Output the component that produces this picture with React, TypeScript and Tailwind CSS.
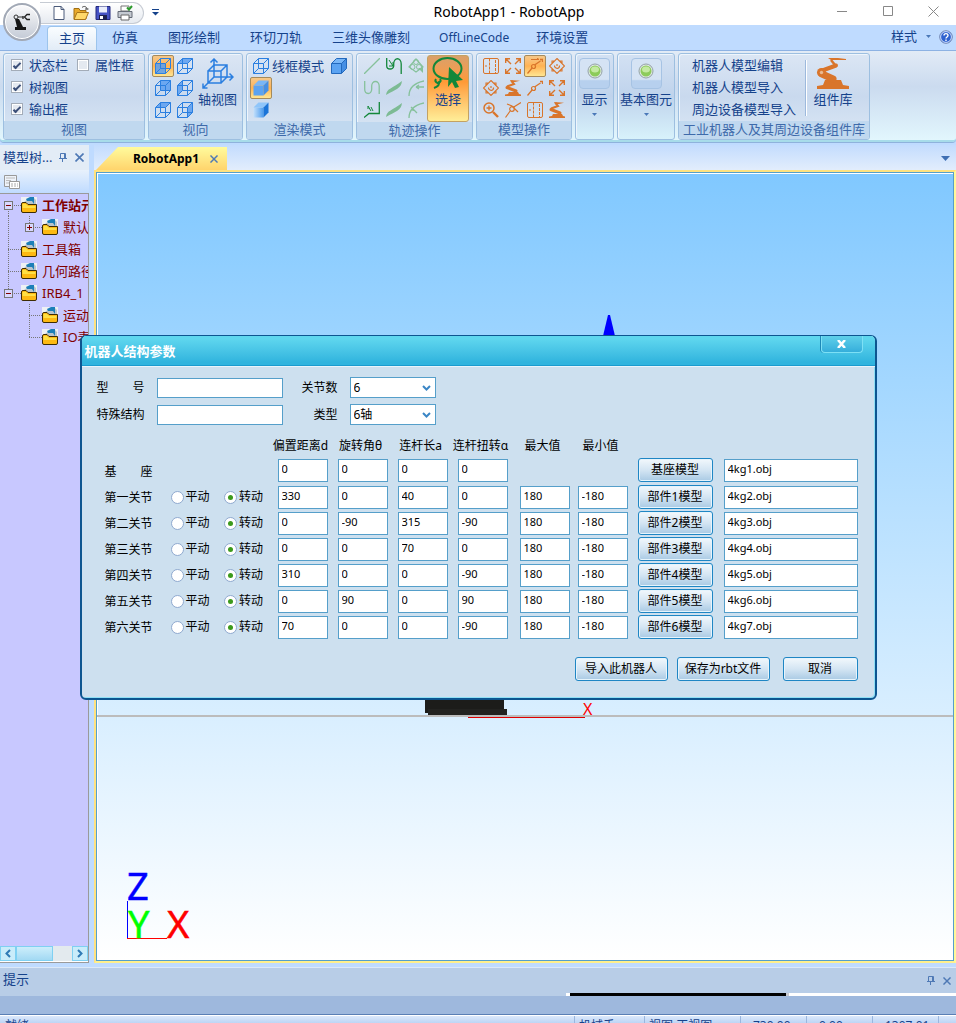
import React from "react";

const BLUE = "#2b7fe0";
const GREEN = "#12873a";
const ORANGE = "#d9752b";

type Kids = { children?: React.ReactNode };

function Ico({ children, size = 16 }: Kids & { size?: number }) {
  return (
    <svg width={size} height={size} viewBox="0 0 16 16" fill="none" className="shrink-0" aria-hidden="true">
      {children}
    </svg>
  );
}

const FACES: Record<string, string> = {
  front: "0.5,5.5 10.5,5.5 10.5,15.5 0.5,15.5",
  back: "5.5,0.5 15.5,0.5 15.5,10.5 5.5,10.5",
  top: "0.5,5.5 5.5,0.5 15.5,0.5 10.5,5.5",
  left: "0.5,5.5 5.5,0.5 5.5,10.5 0.5,15.5",
  right: "10.5,5.5 15.5,0.5 15.5,10.5 10.5,15.5",
};

function Cube({ face }: { face?: string }) {
  return (
    <Ico>
      {face && <polygon points={FACES[face]} fill="#5a9df0" fillOpacity=".85" />}
      <g stroke={BLUE} strokeWidth="1">
        <path d="M.5 5.500h10v10H.5zM5.500.5h10v10h-10zM.5 5.500l5-5M10.500 5.500l5-5M.5 15.500l5-5M10.500 15.500l5-5" />
      </g>
    </Ico>
  );
}

function SolidCube({ edges = true }: { edges?: boolean }) {
  return (
    <Ico>
      <path d="M.5 5.500h10v10H.5z" fill="#5ba3f2" />
      <path d="M.5 5.500l5-5h10l-5 5z" fill="#78b6f7" />
      <path d="M10.500 5.500l5-5v10l-5 5z" fill="#468fe4" />
      {edges && <path d="M.5 5.500h10v10H.5zM.5 5.500l5-5h10v10l-5 5M10.500 5.500l5-5" stroke="#2369bd" />}
    </Ico>
  );
}

function ShadedCube() {
  return (
    <Ico>
      <defs>
        <linearGradient id="shade" x1="0" x2="1">
          <stop offset="0" stopColor="#c4e0fb" />
          <stop offset="1" stopColor="#4a9bee" />
        </linearGradient>
      </defs>
      <path d="M.5 5.500h10v10H.5z" fill="url(#shade)" />
      <path d="M.5 5.500l5-5h10l-5 5z" fill="#8ec5fa" />
      <path d="M10.500 5.500l5-5v10l-5 5z" fill="#1a74d8" />
    </Ico>
  );
}

function AxisCube() {
  return (
    <svg width="32" height="32" viewBox="0 0 32 32" fill="none" stroke={BLUE} strokeWidth="1.500" aria-hidden="true">
      <path d="M6 13h13v12H6zM12 7h13v12H12zM6 13l6-6M19 13l6-6M6 25l6-6M19 25l6-6" />
      <path d="M12 8V1M8.500 4.500L12 1l3.500 3.500M25 19h6M27.500 15.500L31 19l-3.500 3.500M6 25l-5 5M1 25.500V30h4.500" />
    </svg>
  );
}

const pale = "#86c19b";
const TRACK_ICONS = [
  <Ico><path d="M0 16L16 0" stroke={pale} strokeWidth="1.300" /></Ico>,
  <Ico><path d="M.7 0v8c0 4 7 4 7 0V6c0-7 7.500-7 7.500 0v10" stroke={GREEN} strokeWidth="1.300" /><path d="M3 2l4 6M7 4v4H3" stroke={GREEN} /></Ico>,
  <Ico><path d="M8 1L1 9l7 5 7-5z" stroke={pale} strokeWidth="1.200" /><circle cx="8" cy="4" r="2.500" stroke={pale} /><circle cx="4.500" cy="9" r="2.500" stroke={pale} /><circle cx="11" cy="9" r="2.500" stroke={pale} /><path d="M10 10h5v5z" fill={pale} /></Ico>,
  <Ico><path d="M.7 1v8c0 6 7 6 7 0V6c0-6 7.500-6 7.500 0v8" stroke={pale} strokeWidth="1.300" /></Ico>,
  <Ico><path d="M0 15c1-7 6-6 16-14-1 8-6 8-16 14z" fill="#7dbb94" /></Ico>,
  <Ico><path d="M1 16C1 8 6 3 16 1M8 7h8M8 7l3-2M8 7l3 2" stroke={pale} strokeWidth="1.300" /></Ico>,
  <Ico><path d="M0 15.500l5-4h10.300V0" stroke={GREEN} strokeWidth="1.300" /><path d="M4 4l3 5M4 4v3M7 5l2 4" stroke={GREEN} /></Ico>,
  <Ico><path d="M0 15c1-7 6-6 16-14-1 8-6 8-16 14z" fill="#7dbb94" /></Ico>,
  <Ico><path d="M1 16C1 8 6 3 16 1M3 5l6 6M5 6v3" stroke={pale} strokeWidth="1.300" /></Ico>,
];

const Panel = () => (
  <Ico>
    <rect x=".5" y=".5" width="15" height="15" rx="1.500" stroke={ORANGE} />
    <path d="M6.500 .5v15M12.500 2v13" stroke={ORANGE} strokeDasharray="3 1" />
    <path d="M2 8h2" stroke={ORANGE} />
  </Ico>
);
const Expand = () => (
  <Ico>
    <path d="M1 1l5 5M15 1l-5 5M1 15l5-5M15 15l-5-5M.7 5V.7H5M11 .7h4.300V5M.7 11v4.300H5M11 15.300h4.300V11" stroke={ORANGE} strokeWidth="1.400" />
  </Ico>
);
const Joint = ({ arrow }: { arrow?: boolean }) => (
  <Ico>
    <path d="M.5 15.500l5-6M7.500 7l6-4M13 1.500h2.500V4" stroke={ORANGE} strokeWidth="1.300" />
    <circle cx="6.500" cy="8.500" r="2" stroke={ORANGE} strokeWidth="1.200" />
    {arrow && <path d="M4 1.500h8M10 0l2 1.500" stroke={ORANGE} />}
  </Ico>
);
const Target = () => (
  <Ico>
    <path d="M8 .5L15.500 8 8 15.500.5 8zM3 5V3h2M11 3h2v2M13 11v2h-2M5 13H3v-2" stroke={ORANGE} strokeWidth="1.100" />
    <path d="M5.500 7.500c0 4 5.500 3.500 5 0M8 6v2" stroke={ORANGE} strokeWidth="1.200" />
  </Ico>
);
const Arm = () => (
  <Ico>
    <path d="M0 16v-1.500l3-.5 1-2h9l1 2 2 .5V16z" fill={ORANGE} />
    <path d="M2 7.500l9 3.500" stroke={ORANGE} strokeWidth="3" strokeLinecap="round" />
    <path d="M2 6.500L9 4 6.500 1" stroke={ORANGE} strokeWidth="2" />
    <path d="M5 0l10 .7L10 2 6 2z" fill={ORANGE} />
  </Ico>
);
const Magnifier = () => (
  <Ico>
    <circle cx="6" cy="6" r="5" stroke={ORANGE} strokeWidth="1.500" />
    <path d="M3.500 6h5M6 3.500v5" stroke={ORANGE} strokeWidth="1.300" />
    <path d="M10 10l5 5" stroke={ORANGE} strokeWidth="2.400" />
  </Ico>
);
const JointUp = () => (
  <Ico>
    <path d="M.5 15.500l5-7M8 5.500l8-5M2 2l5 2 6 6" stroke={ORANGE} strokeWidth="1.200" />
    <circle cx="7" cy="7" r="2.300" stroke={ORANGE} strokeWidth="1.200" />
  </Ico>
);
const MODEL_ICONS = [
  <Panel />, <Expand />, <Joint arrow />, <Target />,
  <Target />, <Arm />, <Joint />, <Expand />,
  <Magnifier />, <JointUp />, <Panel />, <Arm />,
];

function BigArm() {
  return (
    <svg width="34" height="33" viewBox="0 0 34 33" fill="none" aria-hidden="true">
      <path d="M1 32v-3l6-1 2-5h16l2 5 6 1v3z" fill={ORANGE} />
      <path d="M6 17l11 5" stroke={ORANGE} strokeWidth="7" strokeLinecap="round" />
      <path d="M5 14L20 8.500" stroke={ORANGE} strokeWidth="4" strokeLinecap="round" />
      <path d="M19 8l-4-5" stroke={ORANGE} strokeWidth="2.500" />
      <path d="M12 1h10l8 1v1H15z" fill={ORANGE} />
      <circle cx="5.500" cy="15.500" r="4.500" fill={ORANGE} />
      <circle cx="5.500" cy="15.500" r="1.700" fill="#eab98f" />
    </svg>
  );
}

function Lasso() {
  return (
    <svg width="32" height="34" viewBox="0 0 32 34" fill="none" aria-hidden="true">
      <ellipse cx="15.500" cy="12.500" rx="14" ry="10.500" stroke={GREEN} strokeWidth="2" />
      <path d="M4 23a2.500 2.500 0 1 0 4 0M7 25c1 4-2 6-5 7" stroke={GREEN} strokeWidth="2" />
      <path d="M17 11l14 13-7 1 3 6-4 1-3-6-4 5z" fill={GREEN} />
    </svg>
  );
}

function Pin() {
  return (
    <svg width="8" height="9" viewBox="0 0 8 9" fill="none" stroke="#4f79b5" aria-hidden="true">
      <path d="M1.500 5.500v-5h5v5M5.500 1v4M0 5.500h8M3.500 6v3" />
    </svg>
  );
}
function Cross({ size = 9, color = "#4f79b5" }: { size?: number; color?: string }) {
  return (
    <svg width={size} height={size} viewBox="0 0 9 9" aria-hidden="true">
      <path d="M.5 .5l8 8M8.500 .5l-8 8" stroke={color} strokeWidth="1.600" />
    </svg>
  );
}
function Caret({ className = "" }: { className?: string }) {
  return (
    <svg width="5" height="3" viewBox="0 0 5 3" className={className} aria-hidden="true">
      <path d="M0 0h5L2.500 3z" fill="#4a78b8" />
    </svg>
  );
}

function Group({ caption, width, children }: Kids & { caption?: string; width: string }) {
  return (
    <section
      className={`flex shrink-0 flex-col overflow-hidden rounded-[3px] border border-[#9dbfe0] shadow-[inset_1px_1px_0_#eef5fc] ${
        caption ? "bg-linear-to-b from-[#dbe6f4] via-[#c9d9ee] to-[#dbe8f5]" : "bg-linear-to-b from-[#d3e1f3] via-[#bfd3ec] to-[#d8f2fb]"
      } ${width}`}
    >
      <div className="flex flex-1">{children}</div>
      {caption && (
        <h2 className="h-[18px] bg-[#c0d8ef] text-center text-[13px] leading-[16px] whitespace-nowrap text-[#3e6aaa]">{caption}</h2>
      )}
    </section>
  );
}

function Tool({ on, label, children }: Kids & { on?: boolean; label: string }) {
  return (
    <button
      aria-label={label}
      className={`flex size-[22px] items-center justify-center rounded-[2px] ${
        on ? "border border-[#a58a5c] bg-linear-to-b from-[#f5c88a] via-[#ffb252] to-[#ffe591]" : ""
      }`}
    >
      {children}
    </button>
  );
}

function Check({ label, on }: { label: string; on?: boolean }) {
  return (
    <label className="flex h-[22px] items-center gap-[6px]">
      <input
        type="checkbox"
        defaultChecked={on}
        className="flex size-[12px] appearance-none items-center justify-center border border-[#a3acb8] bg-[#e4e9f0] shadow-[inset_0_0_0_1px_#fff] before:hidden before:h-[8px] before:w-[4px] before:rotate-45 before:border-r-2 before:border-b-2 before:border-[#3b4f78] checked:before:block"
      />
      {label}
    </label>
  );
}

function Orb({ label }: { label: string }) {
  return (
    <button className="flex flex-1 flex-col items-center pt-[4px]">
      <span className="flex size-[31px] flex-col items-center rounded-[4px] border border-[#a6c3e4] bg-linear-to-b from-[#d5e3f4] from-70% to-[#b7d0ee] to-75% pt-[4px]">
        <svg width="16" height="16" viewBox="0 0 16 16" aria-hidden="true">
          <circle cx="8" cy="8" r="7" fill="#dfe6e4" stroke="#93a2a5" />
          <circle cx="8" cy="8" r="5.500" fill="#8ccb5a" />
          <ellipse cx="8" cy="6.500" rx="4" ry="3" fill="#c4eaa2" />
        </svg>
      </span>
      <span className="leading-[20px] whitespace-nowrap">{label}</span>
      <Caret className="mt-[4px]" />
    </button>
  );
}

const CUBES: [string, string][] = [
  ["前视", "front"], ["后视", "top"], ["仰视", "back"], ["左视", "left"], ["俯视", "top"], ["右视", "right"],
];

function Ribbon() {
  return (
    <div className="flex h-[92px] shrink-0 gap-[3px] overflow-hidden rounded-b-[4px] border-t border-b-2 border-t-[#8db2e3] border-b-[#a7dcea] bg-linear-to-b from-[#e2ebf6] via-[#cbdbef] via-40% to-[#e2f6fd] px-[3px] pt-[2px] text-[13px] text-[#15428b] shadow-[0_1px_0_#8fb2dc]">
      <Group caption="视图" width="w-[142px]">
        <div className="flex gap-[9px] pl-[7px] leading-[20px]">
          <div>
            <Check label="状态栏" on />
            <Check label="树视图" on />
            <Check label="输出框" on />
          </div>
          <Check label="属性框" />
        </div>
      </Group>
      <Group caption="视向" width="w-[95px]">
        <div className="grid grid-cols-[22px_22px] content-start pt-px pl-[3px]">
          {CUBES.map(([label, face], i) => (
            <Tool key={label} label={label} on={i === 0}><Cube face={face} /></Tool>
          ))}
        </div>
        <button className="flex flex-1 flex-col items-center pt-[4px] pr-[3px] leading-[18px] whitespace-nowrap">
          <AxisCube />
          轴视图
        </button>
      </Group>
      <Group caption="渲染模式" width="w-[107px]">
        <div className="flex flex-1 flex-col pt-px pl-[3px]">
          <div className="flex">
            <button className="flex h-[22px] items-center gap-[3px] pl-[3px] leading-[20px] whitespace-nowrap"><Cube />线框模式</button>
            <span className="ml-[4px]"><Tool label="实体边线"><SolidCube /></Tool></span>
          </div>
          <Tool label="实体" on><SolidCube edges={false} /></Tool>
          <Tool label="渐变"><ShadedCube /></Tool>
        </div>
      </Group>
      <Group caption="轨迹操作" width="w-[117px]">
        <div className="grid grid-cols-[22px_22px_22px] content-start pt-px pl-[4px]">
          {TRACK_ICONS.map((icon, i) => <Tool key={i} label={`轨迹工具 ${i + 1}`}>{icon}</Tool>)}
        </div>
        <button className="mt-px flex h-[67px] w-[42px] flex-col items-center rounded-[3px] border border-[#c3a263] bg-linear-to-b from-[#d9a06a] via-[#ff9a36] via-40% to-[#ffee98] leading-[18px]">
          <Lasso />
          选择
        </button>
      </Group>
      <Group caption="模型操作" width="w-[96px]">
        <div className="grid grid-cols-[22px_22px_22px_22px] content-start pt-px pl-[3px]">
          {MODEL_ICONS.map((icon, i) => <Tool key={i} label={`模型工具 ${i + 1}`} on={i === 2}>{icon}</Tool>)}
        </div>
      </Group>
      <Group width="w-[39px]"><Orb label="显示" /></Group>
      <Group width="w-[58px]"><Orb label="基本图元" /></Group>
      <Group caption="工业机器人及其周边设备组件库" width="w-[192px]">
        <div className="flex flex-col pl-[13px]">
          {["机器人模型编辑", "机器人模型导入", "周边设备模型导入"].map((t) => (
            <button key={t} className="h-[22px] text-left leading-[20px] whitespace-nowrap">{t}</button>
          ))}
        </div>
        <span className="mt-[6px] ml-[9px] h-[56px] w-[2px] border-l border-[#9db9dc] bg-white" />
        <button className="flex flex-1 flex-col items-center pt-[3px] pr-[10px] leading-[18px]">
          <BigArm />
          组件库
        </button>
      </Group>
    </div>
  );
}

function TitleBar() {
  return (
    <header className="relative flex h-[25px] shrink-0 items-center bg-white pl-[40px]">
      <div className="flex h-[22px] items-center gap-[6px] rounded-r-full border border-l-0 border-[#c6cbd3] bg-linear-to-b from-white to-[#e6eaf0] pr-[10px] pl-[11px]">
        <button aria-label="新建"><Ico><path d="M3 1.500h7l3 3v10H3z" fill="#fff" stroke="#4a5a7a" /><path d="M10 1v3.500h3" stroke="#4a5a7a" /></Ico></button>
        <button aria-label="打开"><Ico><path d="M1 14V3.500h5l1 2h6V14z" fill="#e9a92a" stroke="#a06f14" /><path d="M1 14.500l3-7h11.500l-3 7z" fill="#ffd869" stroke="#a8741a" /><path d="M9 2.500c2-2 5-1 5 2M12 4h3.500" stroke="#444" /></Ico></button>
        <button aria-label="保存"><Ico><path d="M1 1.500h14v13H1z" fill="#4552c4" stroke="#23287c" /><path d="M4 1.500h8v6H4z" fill="#e9edfb" /><path d="M4 10h8v5H4z" fill="#1c2050" /><path d="M5 11h3v3H5z" fill="#fff" /></Ico></button>
        <button aria-label="打印"><Ico><path d="M4 1h8v5H4z" fill="#fff" stroke="#777" /><path d="M1 6.500h14v6H1z" fill="#c4c9d1" stroke="#646b77" /><path d="M4 10h8v5H4z" fill="#fff" stroke="#666" /><path d="M10 2.500l2 2L15 1" stroke="#2c9a2c" strokeWidth="2" /></Ico></button>
      </div>
      <button aria-label="自定义" className="ml-[8px]">
        <svg width="7" height="7" viewBox="0 0 7 7" className="block" aria-hidden="true"><path d="M0 .5h7" stroke="#15428b" /><path d="M0 3h7L3.500 6.500z" fill="#15428b" /></svg>
      </button>
      <h1 className="pointer-events-none absolute inset-x-0 top-0 pl-[62px] text-center text-[14px] leading-[24px] text-black">RobotApp1 - RobotApp</h1>
      <div className="mb-[3px] ml-auto flex items-center gap-[34px] pr-[17px]">
        <button aria-label="最小化"><svg width="12" height="12" viewBox="0 0 12 12" className="block"><path d="M1 6.500h10" stroke="#888" /></svg></button>
        <button aria-label="最大化"><svg width="12" height="12" viewBox="0 0 12 12" fill="none" className="block"><path d="M1.500 1.500h9v9h-9z" stroke="#888" /></svg></button>
        <button aria-label="关闭"><svg width="11" height="11" viewBox="0 0 11 11" className="block"><path d="M.5 .5l10 10M10.500 .5l-10 10" stroke="#888" /></svg></button>
      </div>
      <button aria-label="应用菜单" className="absolute top-[3px] left-[3px] z-10 flex size-[38px] items-center justify-center rounded-full border-2 border-[#a2a9b6] bg-linear-to-b from-[#fbfbfc] via-[#dfe2e8] to-[#c3cad6] shadow-[inset_0_0_0_1px_#fff]">
        <svg width="18" height="18" viewBox="0 0 18 18" fill="none" aria-hidden="true">
          <path d="M2 14h11v3H2zM2 6h4l4 8H4z" fill="#161616" />
          <circle cx="3" cy="4" r="2" stroke="#333" /><path d="M5 4h5" stroke="#333" />
          <path d="M17 1.500h-3l-2.500 2.500L14 6.500h3M10 3v3" stroke="#222" strokeWidth="1.300" />
        </svg>
      </button>
    </header>
  );
}

function Tabs() {
  return (
    <nav className="flex h-[25px] shrink-0 items-end bg-[#bfdbff] pl-[47px] text-[13px] leading-[23px] whitespace-nowrap text-[#15428b]">
      <a href="#home" className="h-[24px] rounded-t-[4px] border border-b-0 border-[#9cc4ec] bg-linear-to-b from-[#fafdff] to-[#e2ecf7] px-[11px]">主页</a>
      {["仿真", "图形绘制", "环切刀轨", "三维头像雕刻"].map((t) => (
        <a key={t} href={`#${t}`} className="h-[24px] px-[15px]">{t}</a>
      ))}
      <a href="#offline" className="h-[24px] px-[14px] text-[12px]">OffLineCode</a>
      <a href="#env" className="h-[24px] px-[13px]">环境设置</a>
      <button className="mb-[2px] ml-auto flex items-center gap-[9px]">样式<Caret /></button>
      <button aria-label="帮助" className="mr-[3px] mb-[6px] ml-[8px]">
        <svg width="14" height="14" viewBox="0 0 14 14" fill="none" className="block" aria-hidden="true">
          <circle cx="7" cy="7" r="6.300" fill="#2f62cf" stroke="#7d8fb5" /><circle cx="7" cy="7" r="5.400" stroke="#cfe0ff" />
          <path d="M5 5.500c0-2.500 4-2.500 4 0C9 7 7 7 7 8.500M7 9.500v1.500" stroke="#fff" strokeWidth="1.400" />
        </svg>
      </button>
    </nav>
  );
}

type Node = { text: string; deep?: boolean; guide: string; box?: [number, boolean]; bold?: boolean };
const TREE: Node[] = [
  { text: "工作站元", guide: "M8.500 11v11M8 11.500h13", box: [8, false], bold: true },
  { text: "默认", deep: true, guide: "M8.500 0v22M29.500 0v11M29 11.500h13", box: [29, true] },
  { text: "工具箱", guide: "M8.500 0v22M8 11.500h13" },
  { text: "几何路径", guide: "M8.500 0v22M8 11.500h13" },
  { text: "IRB4_1", guide: "M8.500 0v11M8 11.500h13", box: [8, false] },
  { text: "运动", deep: true, guide: "M29.500 0v22M29 11.500h13" },
  { text: "IO表", deep: true, guide: "M29.500 0v11M29 11.500h13" },
];

function Folder() {
  return (
    <svg width="16" height="16" viewBox="0 0 16 16" className="mr-[5px] shrink-0" aria-hidden="true">
      <path d="M0 0h16v9H0z" fill="#eef1f4" />
      <path d="M3 5l5-4h5l2 2v5H3z" fill="#b9c4cc" />
      <path d="M5 2l4-2h4v7l-2-3-5 0z" fill="#1c7fb8" />
      <path d="M.5 7Q.5 5.500 2 5.500h3l2 2h8.500V14q0 1.500-1.500 1.500H2Q.5 15.500.5 14z" fill="#fdb913" stroke="#3d2c05" />
      <path d="M1.500 7h3.500l2 2h7.500v2H1.500z" fill="#ffe045" />
    </svg>
  );
}

function Sidebar() {
  return (
    <aside className="flex w-[89px] shrink-0 flex-col">
      <div className="flex h-[25px] shrink-0 items-center bg-[#e3ecf6] pl-[3px] text-[13px] leading-[20px] whitespace-nowrap text-[#15428b]">
        <span className="pb-[2px]">模型树...</span>
        <button aria-label="固定" className="ml-auto"><Pin /></button>
        <button aria-label="关闭面板" className="mr-[5px] ml-[8px]"><Cross /></button>
      </div>
      <div className="flex h-[23px] shrink-0 items-center bg-linear-to-b from-[#e8f1fc] to-[#bfdbff] pl-[4px]">
        <button aria-label="属性">
          <svg width="17" height="14" viewBox="0 0 17 14" fill="none" aria-hidden="true">
            <path d="M.5 .5h12v11H.5z" fill="#eef3fa" stroke="#999" /><path d="M2 3h9M2 5.500h5M2 8h3" stroke="#bbb" />
            <path d="M5.500 6.500h10v7h-10z" fill="#fff" stroke="#999" /><path d="M7 9h7M7 11h7" stroke="#aaa" strokeDasharray="2 1" />
          </svg>
        </button>
      </div>
      <div className="flex flex-1 flex-col overflow-hidden border-t border-r border-b border-[#9a9a9a] bg-[#c8c8ff]">
        <ul className="flex-1">
          {TREE.map((n) => (
            <li key={n.text} className={`flex h-[22px] items-center overflow-hidden text-[13px] leading-[20px] whitespace-nowrap text-[#800000] ${n.bold ? "font-bold" : ""}`}>
              <svg width={n.deep ? 42 : 21} height="22" fill="none" className="shrink-0" aria-hidden="true">
                <path d={n.guide} stroke="#777" strokeDasharray="1 1" />
                {n.box && (
                  <g>
                    <rect x={n.box[0] - 3.5} y="7.500" width="8" height="8" fill="#d8d8ff" stroke="#777" />
                    <path d={`M${n.box[0] - 2} 11.500h5${n.box[1] ? "m-2.500-2.500v5" : ""}`} stroke="#800000" />
                  </g>
                )}
              </svg>
              <Folder />
              {n.text}
            </li>
          ))}
        </ul>
        <div className="flex h-[16px] border-b border-white bg-[#e3eaee]">
          <button aria-label="左移" className="flex w-[16px] items-center justify-center border border-[#7fd0f2] bg-[#c9ecfa]">
            <svg width="6" height="9" viewBox="0 0 6 9" fill="none"><path d="M5 1L1.500 4.500 5 8" stroke="#2f7ab5" strokeWidth="2" /></svg>
          </button>
          <span className="w-[37px] border border-[#7fd0f2] bg-linear-to-b from-[#cdeefb] to-[#a2d9f3]" />
          <button aria-label="右移" className="ml-auto flex w-[16px] items-center justify-center border border-[#7fd0f2] bg-[#c9ecfa]">
            <svg width="6" height="9" viewBox="0 0 6 9" fill="none"><path d="M1 1l3.500 3.500L1 8" stroke="#2f7ab5" strokeWidth="2" /></svg>
          </button>
        </div>
      </div>
    </aside>
  );
}

function Workspace() {
  return (
    <main className="flex min-w-0 flex-1 flex-col">
      <div className="flex h-[25px] shrink-0 items-end bg-linear-to-b from-[#c3dcfe] to-[#e2edfc] pl-[2px]">
        <div className="flex h-[23px] w-[131px] items-center bg-linear-to-b from-[#fffb9c] to-[#ffd46c] pr-[9px] pl-[37px] [clip-path:polygon(0_100%,22px_0,100%_0,100%_100%)]">
          <span className="text-[12px] leading-[20px] font-bold text-black">RobotApp1</span>
          <button aria-label="关闭文档" className="ml-auto"><Cross size={8} /></button>
        </div>
        <button aria-label="文档列表" className="mr-[6px] mb-[9px] ml-auto">
          <svg width="9" height="5" viewBox="0 0 9 5" className="block"><path d="M0 0h9L4.500 5z" fill="#3f6fb3" /></svg>
        </button>
      </div>
      <div className="flex flex-1 border-2 border-[#ffe27f] border-r-[#fff79a] border-b-[#fff08c]">
        <div className="flex-1 border border-[#559fca] bg-linear-to-b from-[#80c8ff] to-white shadow-[inset_1px_1px_0_#fff]">
          <svg className="block h-full w-full" role="img" aria-label="三维视图">
            <path d="M511 142h2l5 21v10h-12v-10z" fill="#0000ff" />
            <rect x="328" y="520" width="79" height="20" fill="#1c1c1a" />
            <rect x="331" y="536" width="79" height="6" fill="#222220" />
            <rect x="0" y="542" width="100%" height="2" fill="#bcbcbc" />
            <path d="M371 544.500h117" stroke="#e00000" />
            <text x="486" y="542" fontSize="16" fill="#ff0000">X</text>
            <path d="M30.500 728v38" stroke="#0000ff" />
            <path d="M30 765.500h40" stroke="#ff0000" />
            <g fontSize="38">
              <text x="30" y="727" fill="#0000ff" stroke="#0000ff" strokeWidth=".5">Z</text>
              <text x="31" y="765" fill="#00ff00" stroke="#00ff00" strokeWidth=".5">Y</text>
              <text x="70" y="765" fill="#ff0000" stroke="#ff0000" strokeWidth=".5">X</text>
            </g>
          </svg>
        </div>
      </div>
    </main>
  );
}

const ROWS = [
  ["第一关节", "330", "0", "40", "0"],
  ["第二关节", "0", "-90", "315", "-90"],
  ["第三关节", "0", "0", "70", "0"],
  ["第四关节", "310", "0", "0", "-90"],
  ["第五关节", "0", "90", "0", "90"],
  ["第六关节", "70", "0", "0", "-90"],
];
const HEADS = ["偏置距离d", "旋转角θ", "连杆长a", "连杆扭转α", "最大值", "最小值"];

function Field({ label, value, wide }: { label: string; value: string; wide?: boolean }) {
  return (
    <input
      aria-label={label}
      defaultValue={value}
      className={`block h-[23px] border border-[#559fca] bg-white px-[3px] pb-[3px] text-[11px] leading-[16px] text-black outline-none ${wide ? "w-[134px]" : "w-[50px]"}`}
    />
  );
}

function Radio({ name, label, on }: { name: string; label: string; on?: boolean }) {
  return (
    <label className="flex w-[54px] items-center gap-[2px]">
      <input
        type="radio"
        name={name}
        defaultChecked={on}
        className="flex size-[13px] appearance-none items-center justify-center rounded-full border border-[#8fa9cf] bg-white before:hidden before:size-[5px] before:rounded-full before:bg-[#3c9a1c] checked:before:block"
      />
      {label}
    </label>
  );
}

function Btn({ children, width }: Kids & { width: string }) {
  return (
    <button type="button" className={`block h-[24px] rounded-[3px] border border-[#1f86c4] bg-linear-to-b from-[#f2f8fc] via-[#d4e5f3] to-[#a9cae4] text-[12px] leading-[20px] whitespace-nowrap text-black shadow-[inset_0_0_0_1px_#e6f4fc] ${width}`}>
      {children}
    </button>
  );
}

function Combo({ id, value }: { id: string; value: string }) {
  return (
    <div className="grid w-[86px]">
      <select id={id} defaultValue={value} className="col-start-1 row-start-1 h-[21px] appearance-none border border-[#559fca] bg-white pl-[3px] text-[12px] leading-[18px] text-black outline-none">
        <option>{value}</option>
      </select>
      <svg width="9" height="6" viewBox="0 0 9 6" fill="none" className="pointer-events-none col-start-1 row-start-1 mr-[5px] self-center justify-self-end" aria-hidden="true">
        <path d="M1 1l3.500 3.500L8 1" stroke="#3b86c6" strokeWidth="2" />
      </svg>
    </div>
  );
}

function Dialog() {
  const text = "h-[20px] w-[126px] border border-[#559fca] bg-white px-1 text-[12px] outline-none";
  return (
    <div className="absolute inset-x-0 top-[335px] flex justify-center">
      <form
        role="dialog"
        aria-label="机器人结构参数"
        onSubmit={(e) => e.preventDefault()}
        className="flex w-[797px] flex-col overflow-hidden rounded-[6px] border-2 border-t border-[#0d5590] bg-[#cde0ef] pb-[17px] text-[12px] leading-[16px] text-black shadow-[inset_-1px_-1px_0_#8fe0f5]"
      >
        <div className="flex h-[30px] items-start border-b border-[#1b9bcf] bg-linear-to-b from-[#5ed6ee] from-10% to-[#30b4de] to-90% pr-[12px] pl-[3px] shadow-[0_1px_0_#e8f4fb]">
          <h2 className="text-[13px] leading-[30px] font-bold text-white">机器人结构参数</h2>
          <button type="button" aria-label="关闭对话框" className="ml-auto flex h-[17px] w-[42px] items-center justify-center rounded-b-[4px] border border-t-0 border-[#7de0f5] bg-linear-to-b from-[#5fd0ea] to-[#35aedb] shadow-[-1px_0_0_#1d88b8]">
            <svg width="9" height="8" viewBox="0 0 9 8"><path d="M1 0l7 8M8 0L1 8" stroke="#fff" strokeWidth="2.500" /></svg>
          </button>
        </div>
        <div className="grid grid-cols-[60px_126px_67px_86px] items-center gap-y-[6px] pt-[11px] pl-[15px]">
          <label htmlFor="model">型　　号</label>
          <input id="model" className={text} />
          <label htmlFor="joints" className="pr-[12px] text-right">关节数</label>
          <Combo id="joints" value="6" />
          <label htmlFor="special">特殊结构</label>
          <input id="special" className={text} />
          <label htmlFor="kind" className="pr-[12px] text-right">类型</label>
          <Combo id="kind" value="6轴" />
        </div>
        <table className="mt-[11px] ml-[23px] w-[753px] table-fixed border-collapse">
          <colgroup>
            <col className="w-[66px]" /><col className="w-[107px]" />
            <col className="w-[60px]" /><col className="w-[60px]" /><col className="w-[60px]" /><col className="w-[62px]" />
            <col className="w-[58px]" /><col className="w-[60px]" /><col className="w-[86px]" /><col className="w-[134px]" />
          </colgroup>
          <thead>
            <tr className="h-[20px]">
              <td className="p-0" /><td className="p-0" />
              {HEADS.map((h) => (
                <th key={h} scope="col" className="p-0 font-normal whitespace-nowrap">
                  <span className="flex w-[46px] justify-center">{h}</span>
                </th>
              ))}
              <td className="p-0" /><td className="p-0" />
            </tr>
          </thead>
          <tbody>
            <tr className="h-[28px]">
              <th scope="row" className="p-0 pt-1 text-left font-normal">基　　座</th>
              <td className="p-0" />
              {HEADS.slice(0, 4).map((h) => <td key={h} className="p-0"><Field label={`基座 ${h}`} value="0" /></td>)}
              <td className="p-0" /><td className="p-0" />
              <td className="p-0"><Btn width="w-[75px]">基座模型</Btn></td>
              <td className="p-0"><Field wide label="基座模型文件" value="4kg1.obj" /></td>
            </tr>
            {ROWS.map(([name, ...vals], i) => (
              <tr key={name} className="h-[26px]">
                <th scope="row" className="p-0 pt-[2px] text-left font-normal">{name}</th>
                <td className="p-0">
                  <div className="flex">
                    <Radio name={name} label="平动" />
                    <Radio name={name} label="转动" on />
                  </div>
                </td>
                {[...vals, "180", "-180"].map((v, c) => (
                  <td key={c} className="p-0"><Field label={`${name} ${HEADS[c]}`} value={v} /></td>
                ))}
                <td className="p-0"><Btn width="w-[75px]">部件{i + 1}模型</Btn></td>
                <td className="p-0"><Field wide label={`部件${i + 1}模型文件`} value={`4kg${i + 2}.obj`} /></td>
              </tr>
            ))}
          </tbody>
        </table>
        <div className="mt-[17px] flex justify-end gap-[9px] pr-[17px]">
          <Btn width="w-[93px]">导入此机器人</Btn>
          <Btn width="w-[93px]">保存为rbt文件</Btn>
          <span className="pl-[4px]"><Btn width="w-[75px]">取消</Btn></span>
        </div>
      </form>
    </div>
  );
}

export default function App() {
  return (
    <div className="relative flex h-screen flex-col overflow-hidden bg-[#bfdbff] font-['Noto_Sans','Noto_Sans_CJK_SC',sans-serif]">
      <TitleBar />
      <Tabs />
      <Ribbon />
      <div className="flex min-h-0 flex-1 gap-[5px] pt-[3px] pb-[4px]">
        <Sidebar />
        <Workspace />
      </div>
      <section className="flex h-[29px] shrink-0 flex-col border-t border-[#dce9f8] bg-[#b8cde7]">
        <div className="flex flex-1 items-center pr-[5px] pl-[3px] text-[13px] leading-[20px] text-[#15428b]">
          <span className="pb-[4px]">提示</span>
          <button aria-label="固定提示" className="ml-auto"><Pin /></button>
          <button aria-label="关闭提示" className="ml-[8px]"><Cross size={8} /></button>
        </div>
        <div className="flex h-[3px] pl-[566px]">
          <span className="w-[4px] bg-white" />
          <span className="w-[216px] bg-black" />
          <span className="w-[3px] bg-[#c9c9cf]" />
          <span className="flex-1 bg-white" />
        </div>
      </section>
      <div className="h-[19px] shrink-0 border-b border-[#5a7fb5] bg-[#9eb8dd]" />
      <footer className="flex h-[8px] shrink-0 overflow-hidden border-t border-white bg-linear-to-b from-[#dbe8fb] to-[#bdd5f5] text-[12px] leading-[20px] whitespace-nowrap text-[#15428b]">
        <span className="flex-1 pl-[5px]">就绪</span>
        <span className="w-[70px] border-l border-[#9ab6de] pl-[4px]">机械手</span>
        <span className="w-[96px] border-l border-[#9ab6de] pl-[4px]">视图:正视图</span>
        <span className="w-[66px] border-l border-[#9ab6de] pl-[12px]">730.00</span>
        <span className="w-[66px] border-l border-[#9ab6de] pl-[12px]">0.00</span>
        <span className="w-[66px] border-l border-[#9ab6de] pl-[12px]">1307.01</span>
        <span className="w-[18px] border-l border-[#9ab6de]" />
      </footer>
      <Dialog />
    </div>
  );
}
